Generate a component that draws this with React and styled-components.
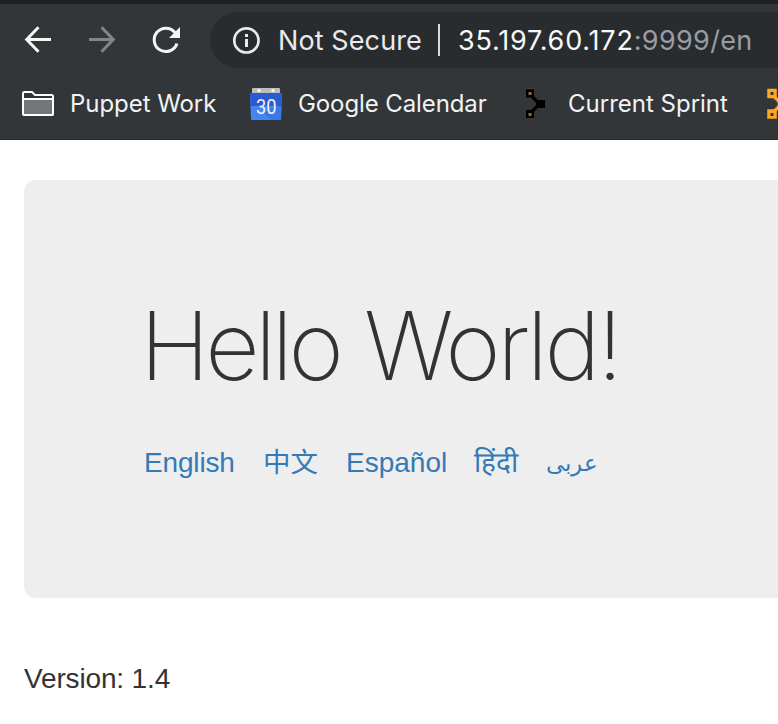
import React from "react";
import styled, { createGlobalStyle } from "styled-components";

const Global = createGlobalStyle`
  * { box-sizing: border-box; }
  html, body { margin: 0; background: #fff; overflow: hidden; }
  svg { display: block; flex: none; }
`;
const Page = styled.div`
  width: 778px; height: 724px; overflow: hidden; background: #fff;
  font-family: "Liberation Sans", "Noto Sans CJK SC", sans-serif; color: #333;
`;
const Chrome = styled.header`
  height: 140px; background: #323639; border-top: 4px solid #202124; border-bottom: 1px solid #28292c;
  font-family: Inter, sans-serif; overflow: hidden;
`;
const Toolbar = styled.div`
  height: 72px; display: flex; align-items: center; padding-left: 22px;
`;
const NavButton = styled.button`
  width: 32px; height: 32px; margin-right: 32px; padding: 0; border: 0; background: none;
  color: ${(p) => (p.$dim ? "#838587" : "#f5f5f2")};
`;
const AddressBar = styled.div`
  flex: none; width: 640px; height: 56px; margin-left: -4px; padding-left: 22px;
  display: flex; align-items: center; border-radius: 28px; background: #282c2f;
  color: #e8eaed; font-size: 27px; white-space: pre;
`;
const Security = styled.span`
  margin-left: 18px; width: 160px; letter-spacing: 0.1px;
`;
const Divider = styled.span`
  width: 2px; height: 32px; background: #dcdad5; margin-right: 18px;
`;
const Host = styled.span`
  color: #f8f8f8; letter-spacing: 0.8px;
`;
const UrlRest = styled.span`
  color: #9a9da3; letter-spacing: 0.35px;
`;
const Bookmarks = styled.nav`
  height: 56px; display: flex; align-items: center; padding-left: 22px;
`;
const Bookmark = styled.a`
  flex: none; width: ${(p) => p.$width}px; display: flex; align-items: center; gap: 16px;
  color: #f1f3f4; font-size: 24px; line-height: 30px; white-space: nowrap;
`;
const BookmarkLabel = styled.span`
  letter-spacing: ${(p) => p.$spacing}px;
`;
const Jumbotron = styled.main`
  width: 800px; height: 418px; margin: 40px 0 0 24px; padding: 111px 0 0 116px;
  border-radius: 12px; background: #eee;
`;
const Title = styled.h1`
  margin: 0; height: 110px; line-height: 110px; font-family: Inter, sans-serif; font-weight: 220; font-size: 94.5px;
  white-space: pre;
`;
const Word = styled.span`
  letter-spacing: ${(p) => p.$spacing}px; word-spacing: 2.4px;
`;
const Languages = styled.div`
  display: flex; margin: 42px 0 0 4px; line-height: 40px; height: 40px;
`;
const Language = styled.a`
  flex: none; width: ${(p) => p.$width}px; color: #337ab7; font-size: ${(p) => p.$size || 28}px;
  letter-spacing: ${(p) => p.$spacing || 0}px; white-space: nowrap;
`;
const Version = styled.p`
  margin: 61px 0 0 24px; line-height: 40px; font-size: 28px; letter-spacing: -0.15px;
`;

const Back = () => (
  <svg width="32" height="32" viewBox="0 0 32 32" fill="none" stroke="currentColor" strokeWidth="3">
    <path d="M29 15.5H5M16.5 3.2L4.7 15.5L16.5 27.8" />
  </svg>
);
const Forward = () => (
  <svg width="32" height="32" viewBox="0 0 32 32" fill="none" stroke="currentColor" strokeWidth="3">
    <path d="M3 15.5H27M15.5 3.2L27.3 15.5L15.5 27.8" />
  </svg>
);
const Reload = () => (
  <svg width="32" height="32" viewBox="0 0 32 32">
    <path d="M27 19.5A11.7 11.7 0 1 1 25 8.5" fill="none" stroke="currentColor" strokeWidth="3" />
    <path d="M30 3V14H19Z" fill="currentColor" />
  </svg>
);
const Info = () => (
  <svg width="28" height="28" viewBox="0 0 28 28">
    <circle cx="14.4" cy="14.4" r="12.1" fill="none" stroke="#e8eaed" strokeWidth="2.7" />
    <path d="M13 8h3v3h-3zM13 13h3v8h-3z" fill="#e8eaed" />
  </svg>
);
const Folder = () => (
  <svg width="32" height="32" viewBox="0 0 32 32">
    <path d="M1 11H31V27H1Z" fill="#737678" />
    <path d="M1 26V5.5Q1 4 2.5 4H10L13 7H29.5Q31 7 31 8.5V26.5Q31 27 30 27H2Q1 27 1 26M1 11H31" fill="none" stroke="#fff" strokeWidth="2" />
  </svg>
);
const CalendarIcon = () => (
  <svg width="32" height="32" viewBox="0 0 32 32">
    <path d="M2 6V1Q2 0 3 0H29Q30 0 30 1V6Z" fill="#bdbdbd" />
    <path d="M0 5H32L31 31Q31 32 30 32H2Q1 32 1 31Z" fill="#4285f4" />
    <path d="M0 5H32L31.5 18H.5Z" fill="#2a5bd0" />
    <path d="M14 25L25 18H31.5L31 31Q31 32 30 32H21Z" fill="#3b78e7" />
    <circle cx="9" cy="2.5" r="1.6" fill="#fff" />
    <circle cx="23" cy="2.5" r="1.6" fill="#fff" />
    <text x="6" y="25.5" textLength="20.5" lengthAdjust="spacingAndGlyphs" fontFamily="Roboto, sans-serif" fontSize="20" fill="#f1f3f4">30</text>
  </svg>
);
const Puppet = ({ color, hole, edge }) => (
  <svg width="32" height="32" viewBox="0 0 32 32">
    <g stroke={edge} strokeWidth="0.5" fill={color}>
      <path d="M5.5 1h9v9h-9zM5.5 21.500h9v9h-9zM16 11.500h9.500v9h-9.500z" />
    </g>
    <path d="M12 8.5L17.5 14V18L12 23.5" fill="none" stroke={color} strokeWidth="3.2" />
    <path d="M8.5 4h3v3h-3zM8.5 25h3v3h-3z" fill={hole} />
  </svg>
);

export default function App() {
  return (
    <Page>
      <Global />
      <Chrome>
        <Toolbar>
          <NavButton aria-label="Back"><Back /></NavButton>
          <NavButton aria-label="Forward" $dim><Forward /></NavButton>
          <NavButton aria-label="Reload"><Reload /></NavButton>
          <AddressBar>
            <Info />
            <Security>Not Secure</Security>
            <Divider />
            <Host>35.197.60.172</Host><UrlRest>:9999/en</UrlRest>
          </AddressBar>
        </Toolbar>
        <Bookmarks>
          <Bookmark $width={228}><Folder /><BookmarkLabel $spacing={-0.05}>Puppet Work</BookmarkLabel></Bookmark>
          <Bookmark $width={270}><CalendarIcon /><BookmarkLabel $spacing={-0.1}>Google Calendar</BookmarkLabel></Bookmark>
          <Bookmark $width={242}><Puppet color="#000" hole="#7d6f55" edge="#5a4d35" /><BookmarkLabel $spacing={0}>Current Sprint</BookmarkLabel></Bookmark>
          <Bookmark $width={32}><Puppet color="#ffa81c" hole="#323639" edge="#ffa81c" /></Bookmark>
        </Bookmarks>
      </Chrome>
      <Jumbotron>
        <Title><Word $spacing={-4.5}>Hello </Word><Word $spacing={-3.4}>World!</Word></Title>
        <Languages>
          <Language $width={119} $spacing={-0.15}>English</Language>
          <Language $width={83} $size={27.5}>中文</Language>
          <Language $width={128}>Español</Language>
          <Language $width={72}>हिंदी</Language>
          <Language $width={60} $size={23}>عربى</Language>
        </Languages>
      </Jumbotron>
      <Version>Version: 1.4</Version>
    </Page>
  );
}
